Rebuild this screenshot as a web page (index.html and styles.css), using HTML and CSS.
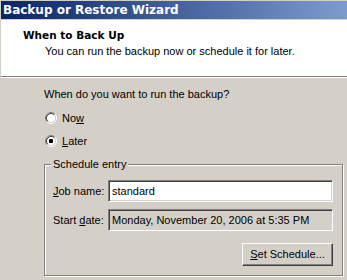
FILE: index.html
```html
<!DOCTYPE html>
<html>
<head>
<meta charset="utf-8">
<link rel="stylesheet" href="styles.css">
</head>
<body>
<div class="window">
  <div class="titlebar">Backup or Restore Wizard</div>
  <div class="header">
    <div class="heading">When to Back Up</div>
    <div class="subheading">You can run the backup now or schedule it for later.</div>
  </div>
  <div class="panel">
    <div class="question">When do you want to run the backup?</div>
    <div class="radio-row">
      <svg class="radio" width="12" height="12" viewBox="0 0 12 12">
        <circle cx="6" cy="6" r="4.5" fill="#fff"/>
        <path d="M2.11 9.89 A5.5 5.5 0 0 1 9.89 2.11" fill="none" stroke="#808080"/>
        <path d="M9.89 2.11 A5.5 5.5 0 0 1 2.11 9.89" fill="none" stroke="#fff"/>
        <path d="M2.82 9.18 A4.5 4.5 0 0 1 9.18 2.82" fill="none" stroke="#404040"/>
        <path d="M9.18 2.82 A4.5 4.5 0 0 1 2.82 9.18" fill="none" stroke="#d4d0c8"/>
      </svg>
      <span class="radio-label">No<u>w</u></span>
    </div>
    <div class="radio-row">
      <svg class="radio" width="12" height="12" viewBox="0 0 12 12">
        <circle cx="6" cy="6" r="4.5" fill="#fff"/>
        <path d="M2.11 9.89 A5.5 5.5 0 0 1 9.89 2.11" fill="none" stroke="#808080"/>
        <path d="M9.89 2.11 A5.5 5.5 0 0 1 2.11 9.89" fill="none" stroke="#fff"/>
        <path d="M2.82 9.18 A4.5 4.5 0 0 1 9.18 2.82" fill="none" stroke="#404040"/>
        <path d="M9.18 2.82 A4.5 4.5 0 0 1 2.82 9.18" fill="none" stroke="#d4d0c8"/>
        <rect x="4" y="4" width="4" height="4" rx="1" fill="#000"/>
      </svg>
      <span class="radio-label"><u>L</u>ater</span>
    </div>
    <div class="group">
      <span class="legend">Schedule entry</span>
      <div class="field-row first">
        <span class="field-label"><u>J</u>ob name:</span>
        <div class="edit">standard</div>
      </div>
      <div class="field-row">
        <span class="field-label">Start <u>d</u>ate:</span>
        <div class="edit readonly">Monday, November 20, 2006 at 5:35 PM</div>
      </div>
      <div class="button-row">
        <div class="button"><u>S</u>et Schedule...</div>
      </div>
    </div>
  </div>
</div>
</body>
</html>
```

FILE: styles.css
```css
html, body {
  margin: 0;
  padding: 0;
}
body {
  width: 347px;
  height: 280px;
  overflow: hidden;
  background: #d4d0c8;
  font-family: "Liberation Sans", Arial, sans-serif;
  font-size: 11px;
  color: #000;
}
.window {
  padding: 1px 0 0 1px;
}
.titlebar {
  height: 18px;
  line-height: 18px;
  padding-left: 2px;
  background: linear-gradient(to right, #0a246a, #7c9ccd);
  color: #fff;
  font-family: "DejaVu Sans", Verdana, sans-serif;
  font-weight: bold;
  font-size: 12px;
  margin-bottom: 1px;
}
.header {
  background: #fff;
  height: 57px;
  padding: 9px 0 0 22px;
  box-sizing: border-box;
  border-bottom: 1px solid #808080;
  box-shadow: 0 1px 0 #fff;
}
.heading {
  font-family: "DejaVu Sans", Verdana, sans-serif;
  font-weight: bold;
  font-size: 10.5px;
  line-height: 13px;
}
.subheading {
  margin: 3px 0 0 22px;
  line-height: 13px;
}
.panel {
  padding: 11px 4px 0 43px;
}
.question {
  line-height: 13px;
}
.radio-row {
  display: flex;
  align-items: center;
  height: 23px;
}
.question + .radio-row {
  margin-top: 5px;
}
.radio {
  display: block;
  margin-left: 1px;
  flex: none;
}
.radio-label {
  margin-left: 5px;
}
.group {
  margin-top: 12px;
  border: 1px solid #808080;
  box-shadow: inset 1px 1px 0 #fff, 1px 1px 0 #fff;
  padding: 0 9px 9px 8px;
}
.legend {
  display: block;
  width: fit-content;
  margin: -7px 0 0 -2px;
  padding: 0 2px;
  line-height: 13px;
  background: #d4d0c8;
}
.field-row {
  display: flex;
  align-items: center;
  margin-top: 7px;
}
.field-row.first {
  margin-top: 9px;
}
.field-label {
  width: 55px;
  flex: none;
}
.edit {
  flex: 1;
  height: 22px;
  box-sizing: border-box;
  background: #fff;
  border-style: solid;
  border-width: 1px;
  border-color: #808080 #fff #fff #808080;
  box-shadow: inset 1px 1px 0 #404040, inset -1px -1px 0 #d4d0c8;
  padding: 0 3px;
  line-height: 20px;
}
.edit.readonly {
  background: #d4d0c8;
}
.button-row {
  display: flex;
  justify-content: flex-end;
  margin-top: 12px;
}
.button {
  width: 91px;
  height: 23px;
  box-sizing: border-box;
  border-style: solid;
  border-width: 1px;
  border-color: #fff #404040 #404040 #fff;
  box-shadow: inset -1px -1px 0 #808080;
  text-align: center;
  line-height: 21px;
}
```
